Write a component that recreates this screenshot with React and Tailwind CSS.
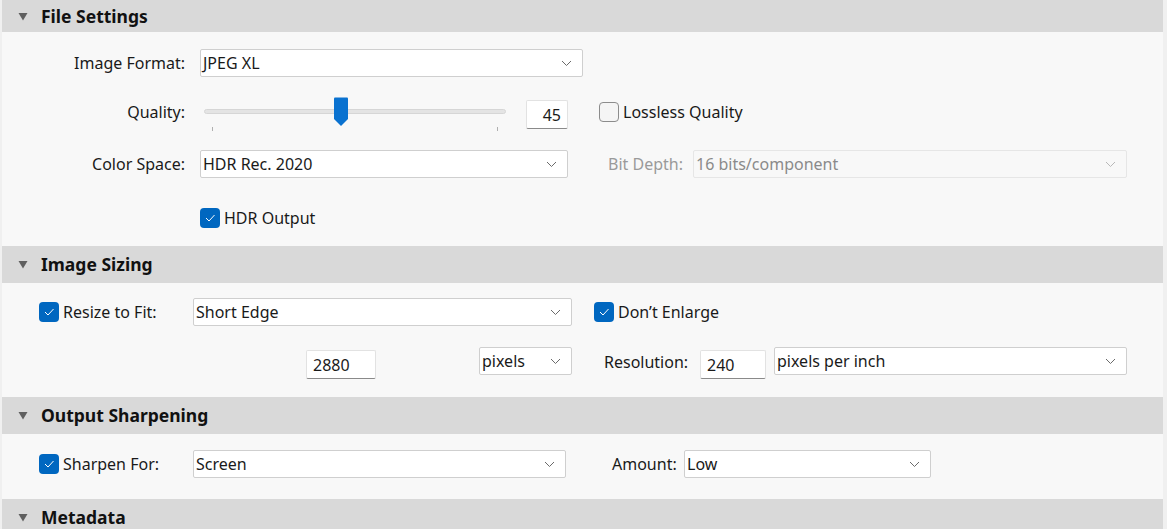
import React from "react";

const font = { fontFamily: '"Noto Sans", "Liberation Sans", sans-serif' };

const Chevron = ({ disabled }) => (
  <svg width="11" height="7" viewBox="0 0 11 7" className="shrink-0">
    <path d="M1 1 L5.5 5.5 L10 1" fill="none" stroke={disabled ? "#b8b8b8" : "#6a6a6a"} strokeWidth="1" />
  </svg>
);

const Select = ({ value, className, disabled }) => (
  <div
    className={`h-[28px] flex items-center justify-between pl-[2px] pr-[10px] border rounded-[2px] shrink-0 ${
      disabled ? "bg-[#f8f8f8] border-[#e6e6e6] text-[#8a8a8a]" : "bg-white border-[#cfcfcf] text-[#1a1a1a]"
    } ${className}`}
  >
    <span>{value}</span>
    <Chevron disabled={disabled} />
  </div>
);

const TextBox = ({ value, className, right }) => (
  <div
    className={`h-[29px] flex items-center px-[6px] bg-white border border-[#e2e2e2] border-b-[#8a8a8a] rounded-[2px] shrink-0 ${
      right ? "justify-end" : ""
    } ${className}`}
  >
    {value}
  </div>
);

const Check = ({ checked }) =>
  checked ? (
    <div className="w-[20px] h-[20px] rounded-[4px] bg-[#0067c0] flex items-center justify-center shrink-0">
      <svg width="12" height="10" viewBox="0 0 12 10">
        <path d="M2 5 L5 8 L10.5 2" fill="none" stroke="white" strokeWidth="1" />
      </svg>
    </div>
  ) : (
    <div className="w-[20px] h-[20px] rounded-[4px] border border-[#8c8c8c] bg-[#f5f5f5] shrink-0" />
  );

const Header = ({ title, className }) => (
  <div className={`flex items-center bg-[#d9d9d9] ${className}`}>
    <svg width="10" height="9" viewBox="0 0 10 9" className="ml-[16px] mr-[13px]">
      <polygon points="0.5,1 9.5,1 5,8.5" fill="#5f5f5f" />
    </svg>
    <span className="font-bold text-[17.5px] text-[#111]">{title}</span>
  </div>
);

const Slider = () => (
  <div className="relative w-[310px] h-[34px]">
    <div className="absolute left-[4px] top-[11px] w-[302px] h-[5px] bg-[#e4e4e4] border border-[#d6d6d6] rounded-full" />
    <svg className="absolute left-[133px] top-[-1px]" width="16" height="30" viewBox="0 0 16 30">
      <path d="M1 1.5 Q1 0.5 2 0.5 L14 0.5 Q15 0.5 15 1.5 L15 22 L8 29 L1 22 Z" fill="#0a72d0" />
    </svg>
    <div className="absolute left-[12px] top-[29px] w-px h-[4px] bg-[#b0b0b0]" />
    <div className="absolute left-[297px] top-[29px] w-px h-[4px] bg-[#b0b0b0]" />
  </div>
);

export default function App() {
  return (
    <div className="w-[1167px] h-[529px] overflow-hidden bg-[#f0f0f0] text-[16px] text-[#1a1a1a]" style={font}>
      <div className="ml-[2px] w-[1161px]">
        <Header title="File Settings" className="h-[32px]" />
        <div className="bg-[#f8f8f8] h-[214px] pt-[17px]">
          <div className="flex items-center h-[28px]">
            <div className="w-[183px] text-right">Image Format:</div>
            <Select value="JPEG XL" className="ml-[15px] w-[383px]" />
          </div>
          <div className="flex items-start h-[34px] mt-[21px]">
            <div className="w-[183px] text-right pt-[2px]">Quality:</div>
            <div className="ml-[15px]">
              <Slider />
            </div>
            <TextBox value="45" right className="ml-[16px] w-[42px] mt-[2px]" />
            <div className="flex items-center ml-[31px] mt-[2px]">
              <Check />
              <span className="ml-[4px]">Lossless Quality</span>
            </div>
          </div>
          <div className="flex items-center h-[28px] mt-[18px]">
            <div className="w-[183px] text-right">Color Space:</div>
            <Select value="HDR Rec. 2020" className="ml-[15px] w-[368px]" />
            <div className="ml-[40px] w-[76px] text-[#9a9a9a] whitespace-nowrap">Bit Depth:</div>
            <Select value="16 bits/component" disabled className="ml-[9px] w-[434px]" />
          </div>
          <div className="flex items-center mt-[28px] ml-[198px]">
            <Check checked />
            <span className="ml-[4px]">HDR Output</span>
          </div>
        </div>

        <Header title="Image Sizing" className="h-[37px]" />
        <div className="bg-[#f8f8f8] h-[114px] pt-[15px]">
          <div className="flex items-center h-[28px]">
            <div className="ml-[37px] flex items-center w-[154px]">
              <Check checked />
              <span className="ml-[4px]">Resize to Fit:</span>
            </div>
            <Select value="Short Edge" className="w-[379px]" />
            <div className="flex items-center ml-[22px]">
              <Check checked />
              <span className="ml-[4px]">Don’t Enlarge</span>
            </div>
          </div>
          <div className="flex items-start h-[34px] mt-[19px]">
            <TextBox value="2880" className="ml-[304px] w-[70px] mt-[5px]" />
            <Select value="pixels" className="ml-[103px] w-[93px] mt-[2px]" />
            <div className="ml-[32px] w-[84px] mt-[5px] whitespace-nowrap">Resolution:</div>
            <TextBox value="240" className="ml-[12px] w-[66px] mt-[5px]" />
            <Select value="pixels per inch" className="ml-[8px] w-[353px] mt-[2px]" />
          </div>
        </div>

        <Header title="Output Sharpening" className="h-[37px]" />
        <div className="bg-[#f8f8f8] h-[65px] pt-[16px]">
          <div className="flex items-center h-[28px]">
            <div className="ml-[37px] flex items-center w-[154px]">
              <Check checked />
              <span className="ml-[4px]">Sharpen For:</span>
            </div>
            <Select value="Screen" className="w-[373px]" />
            <div className="ml-[46px] w-[63px] whitespace-nowrap">Amount:</div>
            <Select value="Low" className="ml-[9px] w-[247px]" />
          </div>
        </div>

        <Header title="Metadata" className="h-[37px]" />
      </div>
    </div>
  );
}
